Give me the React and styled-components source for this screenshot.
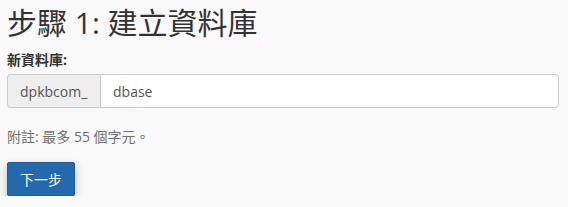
import React, { useState } from 'react';
import styled, { createGlobalStyle } from 'styled-components';

const GlobalStyle = createGlobalStyle`
    html, body {
        margin: 0;
        padding: 0;
        background: #f9f9f9;
    }
    body {
        font-family: 'Open Sans', 'Noto Sans CJK TC', sans-serif;
        color: #333;
    }
`;

const Page = styled.div`
    padding: 0 9px 0 7px;
`;

const Title = styled.h1`
    margin: 0;
    padding-top: 3px;
    font-size: 30px;
    font-weight: 400;
    line-height: 40px;
    color: #333;
`;

const Label = styled.label`
    display: block;
    margin-top: 7px;
    font-size: 14px;
    font-weight: 700;
    line-height: 20px;
`;

const InputGroup = styled.div`
    display: flex;
    margin-top: 4px;
    height: 34px;
    box-sizing: border-box;
`;

const Addon = styled.span`
    display: flex;
    align-items: center;
    padding: 0 12px;
    width: 93px;
    box-sizing: border-box;
    background: #eee;
    border: 1px solid #ccc;
    border-right: none;
    border-radius: 4px 0 0 4px;
    font-size: 14px;
    color: #555;
`;

const TextInput = styled.input`
    flex: 1;
    min-width: 0;
    height: 34px;
    box-sizing: border-box;
    padding: 0 12px;
    border: 1px solid #ccc;
    border-radius: 0 4px 4px 0;
    background: #fff;
    font-family: inherit;
    font-size: 14px;
    color: #555;
    outline: none;
`;

const Help = styled.p`
    margin: 19px 0 0;
    font-size: 14px;
    line-height: 20px;
    color: #717171;
`;

const Button = styled.button`
    display: block;
    margin-top: 15px;
    height: 34px;
    padding: 0 12px;
    border: 1px solid #1f5e97;
    border-radius: 2px;
    background: #2469ad;
    color: #fff;
    font-family: inherit;
    font-size: 14px;
    box-shadow: 0 4px 10px rgba(0, 0, 0, 0.25);
    cursor: pointer;
`;

export default function App() {
    const [name, setName] = useState('dbase');

    return (
        <Page>
            <GlobalStyle />
            <Title>步驟 1: 建立資料庫</Title>
            <Label htmlFor='db'>新資料庫:</Label>
            <InputGroup>
                <Addon>dpkbcom_</Addon>
                <TextInput id='db' value={name} onChange={(e) => setName(e.target.value)} />
            </InputGroup>
            <Help>附註: 最多 55 個字元。</Help>
            <Button type='button'>下一步</Button>
        </Page>
    );
}
